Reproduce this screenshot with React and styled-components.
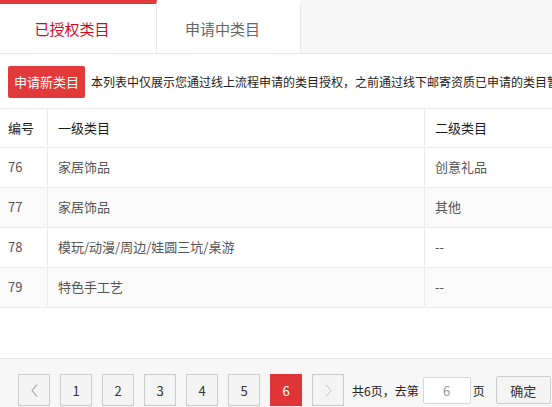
import React from "react";
import styled, { createGlobalStyle } from "styled-components";

const red = "#e2393b";

const GlobalStyle = createGlobalStyle`
  html, body {
    margin: 0;
    padding: 0;
    background: #fff;
    overflow: hidden;
  }
  body {
    font-family: "Noto Sans CJK SC", "Liberation Sans", sans-serif;
    color: #333;
  }
  * { box-sizing: border-box; }
`;

const rows = [
  { id: 76, first: "家居饰品", second: "创意礼品" },
  { id: 77, first: "家居饰品", second: "其他" },
  { id: 78, first: "模玩/动漫/周边/娃圆三坑/桌游", second: "--" },
  { id: 79, first: "特色手工艺", second: "--" },
];

const pages = [1, 2, 3, 4, 5, 6];

const Chevron = ({ dir, color }) => (
  <svg width="7" height="13" viewBox="0 0 7 13">
    <polyline
      points={dir === "left" ? "6,0.5 1,6.5 6,12.5" : "1,0.5 6,6.5 1,12.5"}
      fill="none"
      stroke={color}
      strokeWidth="1"
    />
  </svg>
);

export default function App() {
  return (
    <Page>
      <GlobalStyle />
      <TabBar>
        <Tab $active $width={157}>已授权类目</Tab>
        <Tab $width={144}>申请中类目</Tab>
      </TabBar>

      <Toolbar>
        <PrimaryButton>申请新类目</PrimaryButton>
        <Note>
          本列表中仅展示您通过线上流程申请的类目授权，之前通过线下邮寄资质已申请的类目暂不在此展示
        </Note>
      </Toolbar>

      <Table>
        <Row $head>
          <Cell $first>编号</Cell>
          <Cell>一级类目</Cell>
          <Cell $last>二级类目</Cell>
        </Row>
        {rows.map((r, i) => (
          <Row key={r.id} $striped={i % 2 === 1}>
            <Cell $first>{r.id}</Cell>
            <Cell>{r.first}</Cell>
            <Cell $last>{r.second}</Cell>
          </Row>
        ))}
      </Table>

      <Footer>
        <Pager>
          <PageButton>
            <Chevron dir="left" color="#8a8a8a" />
          </PageButton>
          {pages.map((p) => (
            <PageButton key={p} $active={p === 6}>
              {p}
            </PageButton>
          ))}
          <PageButton>
            <Chevron dir="right" color="#c4c4c4" />
          </PageButton>
          <PagerText>共6页，去第</PagerText>
          <JumpInput defaultValue="6" />
          <PagerText $tight>页</PagerText>
          <ConfirmButton>确定</ConfirmButton>
        </Pager>
      </Footer>
    </Page>
  );
}

const Page = styled.div`
  width: 552px;
  height: 407px;
  display: flex;
  flex-direction: column;
  overflow: hidden;
`;

const TabBar = styled.div`
  display: flex;
  height: 54px;
  flex-shrink: 0;
  background: #f7f7f7;
  border-bottom: 1px solid #e6e6e6;
`;

const Tab = styled.div`
  width: ${(p) => p.$width}px;
  display: flex;
  align-items: center;
  justify-content: center;
  padding: 1px 12px 0 0;
  background: #fff;
  border-top: 4px solid ${(p) => (p.$active ? red : "#fff")};
  border-right: 1px solid #e8e8e8;
  font-size: 15px;
  line-height: 20px;
  color: ${(p) => (p.$active ? "#d4061f" : "#666")};
  cursor: pointer;
`;

const Toolbar = styled.div`
  display: flex;
  align-items: center;
  gap: 6px;
  padding: 12px 0 10px 8px;
  white-space: nowrap;
  overflow: hidden;
  flex-shrink: 0;
`;

const PrimaryButton = styled.button`
  height: 32px;
  padding: 0 6px;
  flex-shrink: 0;
  border: none;
  border-radius: 2px;
  background: ${red};
  color: #fff;
  font-family: inherit;
  font-size: 13px;
  line-height: 32px;
  cursor: pointer;
`;

const Note = styled.span`
  font-size: 12px;
  line-height: 16px;
  color: #222;
`;

const Table = styled.div`
  border-top: 1px solid #e8e8e8;
  flex-shrink: 0;
`;

const Row = styled.div`
  display: grid;
  grid-template-columns: 48px 377px 1fr;
  height: ${(p) => (p.$head ? 39 : 40)}px;
  border-bottom: 1px solid #ebebeb;
  background: ${(p) => (p.$striped ? "#fafafa" : "#fff")};
  font-size: 13px;
  line-height: 16px;
  padding-bottom: 1px;
  color: ${(p) => (p.$head ? "#1a1a1a" : "#555")};
  font-weight: 400;
`;

const Cell = styled.div`
  display: flex;
  align-items: center;
  padding-left: ${(p) => (p.$first ? 8 : 10)}px;
  border-right: ${(p) => (p.$last ? "none" : "1px solid #ebebeb")};
  white-space: nowrap;
  overflow: hidden;
`;

const Footer = styled.div`
  margin-top: auto;
  height: 49px;
  flex-shrink: 0;
  background: #f7f7f7;
  border-top: 1px solid #e8e8e8;
  padding: 15px 0 0 18px;
`;

const Pager = styled.div`
  display: flex;
  align-items: center;
  gap: 10px;
  height: 32px;
`;

const PageButton = styled.div`
  width: 32px;
  height: 32px;
  display: grid;
  place-items: center;
  background: ${(p) => (p.$active ? "#e03536" : "#f4f4f4")};
  border: ${(p) => (p.$active ? "none" : "1px solid #cccccc")};
  color: ${(p) => (p.$active ? "#fff" : "#333")};
  font-size: 13px;
  cursor: pointer;
`;

const PagerText = styled.span`
  font-size: 12px;
  color: #222;
  margin-left: ${(p) => (p.$tight ? -8 : -2)}px;
  white-space: nowrap;
`;

const JumpInput = styled.input`
  width: 48px;
  height: 27px;
  margin-left: -6px;
  border: 1px solid #d6d6d6;
  border-radius: 2px;
  background: #fff;
  text-align: center;
  font-family: inherit;
  font-size: 13px;
  color: #999;
  outline: none;
  padding: 0;
`;

const ConfirmButton = styled.button`
  width: 55px;
  height: 28px;
  margin-left: 1px;
  border: 1px solid #cccccc;
  border-radius: 2px;
  background: #f4f4f4;
  font-family: inherit;
  font-size: 13px;
  color: #333;
  padding: 0;
  cursor: pointer;
`;
